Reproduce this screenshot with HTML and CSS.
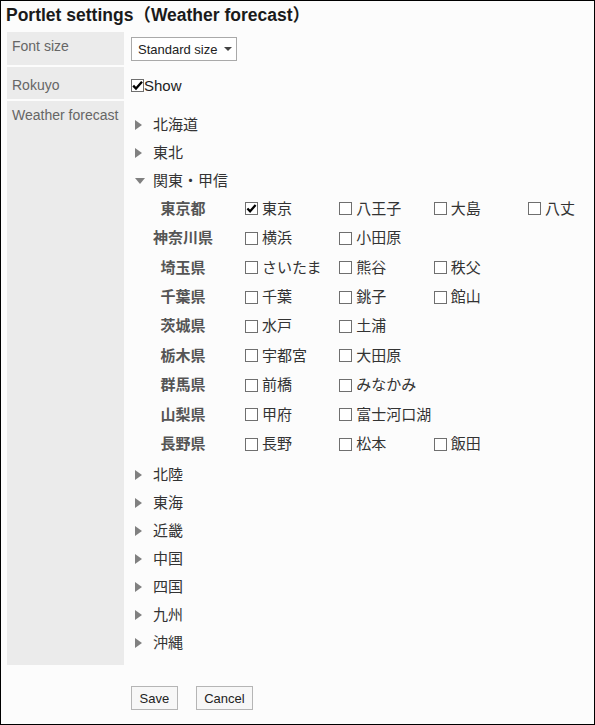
FILE: index.html
```html
<!DOCTYPE html>
<html lang="ja">
<head>
<meta charset="utf-8">
<title>Portlet settings</title>
<link rel="stylesheet" href="styles.css">
</head>
<body>
<div class="page">
  <h1 class="title">Portlet settings（Weather forecast）</h1>
  <div class="form">
    <div class="label">Font size</div>
    <div class="value value-select">
      <span class="select">Standard size<span class="caret"></span></span>
    </div>

    <div class="label label-rokuyo">Rokuyo</div>
    <div class="value value-rokuyo">
      <label class="show"><span class="cb cb-checked"><svg viewBox="0 0 13 13" width="13" height="13"><path d="M2.2 6.6 L5 9.6 L11 2.8" fill="none" stroke="#000" stroke-width="2.3"/></svg></span>Show</label>
    </div>

    <div class="label">Weather forecast</div>
    <div class="value value-tree">
      <ul class="tree">
        <li class="node"><span class="tri tri-right"></span><span class="node-text">北海道</span></li>
        <li class="node"><span class="tri tri-right"></span><span class="node-text">東北</span></li>
        <li class="node"><span class="tri tri-down"></span><span class="node-text">関東・甲信</span></li>
        <li class="cities">
          <div class="pref">東京都</div>
          <div class="city"><span class="cb cb-checked"><svg viewBox="0 0 13 13" width="13" height="13"><path d="M2.4 6.4 L5.1 9.3 L10.6 3" fill="none" stroke="#000" stroke-width="2.2"/></svg></span><span class="city-text">東京</span></div>
          <div class="city"><span class="cb"></span><span class="city-text">八王子</span></div>
          <div class="city"><span class="cb"></span><span class="city-text">大島</span></div>
          <div class="city"><span class="cb"></span><span class="city-text">八丈</span></div>

          <div class="pref">神奈川県</div>
          <div class="city"><span class="cb"></span><span class="city-text">横浜</span></div>
          <div class="city"><span class="cb"></span><span class="city-text">小田原</span></div>

          <div class="pref">埼玉県</div>
          <div class="city"><span class="cb"></span><span class="city-text">さいたま</span></div>
          <div class="city"><span class="cb"></span><span class="city-text">熊谷</span></div>
          <div class="city"><span class="cb"></span><span class="city-text">秩父</span></div>

          <div class="pref">千葉県</div>
          <div class="city"><span class="cb"></span><span class="city-text">千葉</span></div>
          <div class="city"><span class="cb"></span><span class="city-text">銚子</span></div>
          <div class="city"><span class="cb"></span><span class="city-text">館山</span></div>

          <div class="pref">茨城県</div>
          <div class="city"><span class="cb"></span><span class="city-text">水戸</span></div>
          <div class="city"><span class="cb"></span><span class="city-text">土浦</span></div>

          <div class="pref">栃木県</div>
          <div class="city"><span class="cb"></span><span class="city-text">宇都宮</span></div>
          <div class="city"><span class="cb"></span><span class="city-text">大田原</span></div>

          <div class="pref">群馬県</div>
          <div class="city"><span class="cb"></span><span class="city-text">前橋</span></div>
          <div class="city"><span class="cb"></span><span class="city-text">みなかみ</span></div>

          <div class="pref">山梨県</div>
          <div class="city"><span class="cb"></span><span class="city-text">甲府</span></div>
          <div class="city"><span class="cb"></span><span class="city-text">富士河口湖</span></div>

          <div class="pref">長野県</div>
          <div class="city"><span class="cb"></span><span class="city-text">長野</span></div>
          <div class="city"><span class="cb"></span><span class="city-text">松本</span></div>
          <div class="city"><span class="cb"></span><span class="city-text">飯田</span></div>
        </li>
        <li class="node"><span class="tri tri-right"></span><span class="node-text">北陸</span></li>
        <li class="node"><span class="tri tri-right"></span><span class="node-text">東海</span></li>
        <li class="node"><span class="tri tri-right"></span><span class="node-text">近畿</span></li>
        <li class="node"><span class="tri tri-right"></span><span class="node-text">中国</span></li>
        <li class="node"><span class="tri tri-right"></span><span class="node-text">四国</span></li>
        <li class="node"><span class="tri tri-right"></span><span class="node-text">九州</span></li>
        <li class="node"><span class="tri tri-right"></span><span class="node-text">沖縄</span></li>
      </ul>
    </div>
  </div>
  <div class="buttons">
    <button class="btn" type="button">Save</button>
    <button class="btn" type="button">Cancel</button>
  </div>
</div>
</body>
</html>
```

FILE: styles.css
```css
html, body {
  margin: 0;
  padding: 0;
}

body {
  font-family: "Liberation Sans", "Noto Sans CJK JP", sans-serif;
  color: #333;
}

.page {
  width: 595px;
  height: 725px;
  box-sizing: border-box;
  border: 1px solid #000;
  background: #fcfcfc;
  overflow: hidden;
}

.title {
  margin: 0 0 7px 0;
  padding: 4px 0 0 5px;
  font-size: 17.5px;
  line-height: 20px;
  font-weight: bold;
  color: #1a1a1a;
}

.form {
  display: grid;
  grid-template-columns: 117px 1fr;
  row-gap: 2px;
  margin-left: 6px;
}

.label {
  background: #ebebeb;
  color: #666;
  font-size: 14px;
  line-height: 16px;
  padding: 6px 5px 0 5px;
}

.label-rokuyo {
  padding-top: 10px;
}

.value {
  padding-left: 7px;
}

.value-select {
  padding-top: 5px;
  padding-bottom: 4px;
}

.select {
  display: inline-flex;
  align-items: center;
  box-sizing: border-box;
  width: 106px;
  height: 24px;
  padding: 0 0 0 6px;
  border: 1px solid #a9a9a9;
  background: #fff;
  font-size: 13px;
  color: #222;
}

.caret {
  display: inline-block;
  width: 0;
  height: 0;
  margin-left: 6px;
  border-left: 4px solid transparent;
  border-right: 4px solid transparent;
  border-top: 4px solid #444;
}

.value-rokuyo {
  padding-top: 12px;
  height: 20px;
}

.show {
  display: flex;
  align-items: center;
  height: 13px;
  font-size: 15px;
  color: #222;
}

.cb {
  display: inline-block;
  flex: none;
  box-sizing: border-box;
  width: 13px;
  height: 13px;
  border: 1px solid #6f6f6f;
  background: #fff;
  position: relative;
}

.cb svg {
  position: absolute;
  left: -1px;
  top: -1px;
}

.value-tree {
  padding-top: 10px;
  padding-bottom: 8px;
}

.tree {
  list-style: none;
  margin: 0;
  padding: 0 0 0 4px;
}

.node {
  display: flex;
  align-items: center;
  height: 28px;
}

.tri {
  display: inline-block;
  flex: none;
  width: 0;
  height: 0;
}

.tri-right {
  border-top: 5px solid transparent;
  border-bottom: 5px solid transparent;
  border-left: 7px solid #808080;
  margin-right: 11px;
}

.tri-down {
  border-left: 5px solid transparent;
  border-right: 5px solid transparent;
  border-top: 6px solid #808080;
  margin-right: 8px;
}

.node-text {
  font-size: 15px;
  line-height: 28px;
  color: #333;
}

.cities {
  display: grid;
  grid-template-columns: 104px 94.33px 94.33px 94.33px auto;
  grid-auto-rows: 29.44px;
  margin: -1px 0 2.5px 6px;
}

.pref {
  grid-column: 1;
  display: flex;
  align-items: center;
  justify-content: center;
  padding-right: 20px;
  padding-bottom: 3px;
  font-size: 15px;
  font-weight: bold;
  color: #555;
}

.city {
  display: flex;
  align-items: center;
  font-size: 15px;
  color: #333;
}

.city .cb {
  margin-right: 4px;
}

.city-text {
  padding-bottom: 3px;
  white-space: nowrap;
}

.buttons {
  display: flex;
  gap: 18px;
  margin: 21px 0 0 130px;
}

.btn {
  box-sizing: border-box;
  height: 24px;
  padding: 0 7.5px;
  border: 1px solid #b5b5b5;
  border-radius: 0;
  background: #f7f7f7;
  font-family: "Liberation Sans", sans-serif;
  font-size: 13px;
  color: #222;
}
```
